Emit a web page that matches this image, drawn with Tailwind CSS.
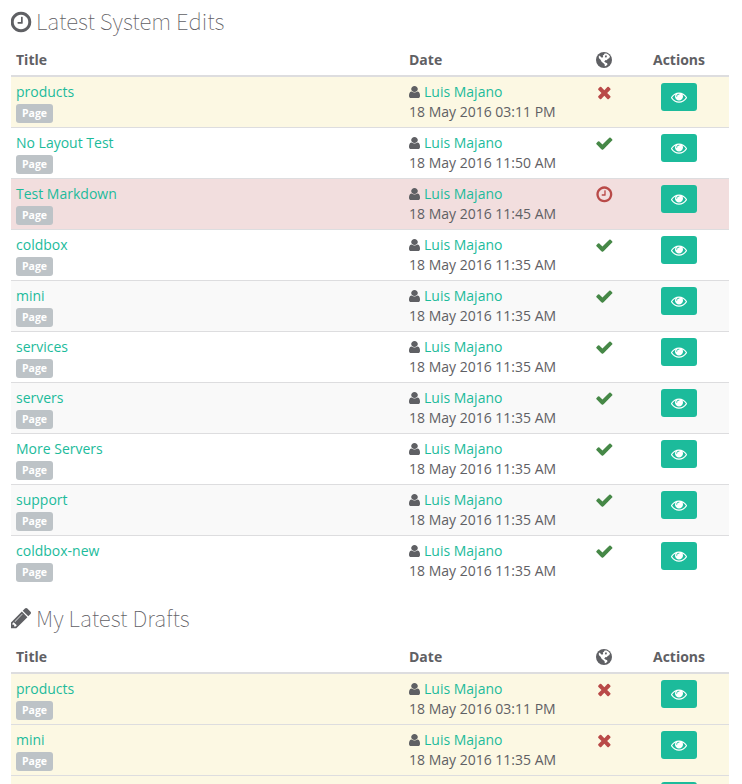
<!DOCTYPE html>
<html lang="en">
<head>
<meta charset="utf-8">
<title>Dashboard</title>
<script src="https://cdn.jsdelivr.net/npm/@tailwindcss/browser@4"></script>
</head>
<body class="bg-white overflow-hidden text-[14px] leading-[20px] text-[#5f6064] font-['Open_Sans',sans-serif]">
<svg class="hidden">
  <symbol id="clock" viewBox="0 0 1792 1792"><path d="M1024 544v448q0 14-9 23t-23 9h-320q-14 0-23-9t-9-23v-64q0-14 9-23t23-9h224v-352q0-14 9-23t23-9h64q14 0 23 9t9 23zm416 352q0-148-73-273t-198-198-273-73-273 73-198 198-73 273 73 273 198 198 273 73 273-73 198-198 73-273zm224 0q0 209-103 385.5t-279.5 279.5-385.5 103-385.5-103-279.5-279.5-103-385.5 103-385.5 279.5-279.5 385.5-103 385.5 103 279.5 279.5 103 385.5z"/></symbol>
  <symbol id="check" viewBox="0 0 1792 1792"><path d="M1671 566q0 40-28 68l-724 724-136 136q-28 28-68 28t-68-28l-136-136-362-362q-28-28-28-68t28-68l136-136q28-28 68-28t68 28l294 295 656-657q28-28 68-28t68 28l136 136q28 28 28 68z"/></symbol>
  <symbol id="times" viewBox="0 0 1792 1792"><path d="M1490 1322q0 40-28 68l-136 136q-28 28-68 28t-68-28l-294-294-294 294q-28 28-68 28t-68-28l-136-136q-28-28-28-68t28-68l294-294-294-294q-28-28-28-68t28-68l136-136q28-28 68-28t68 28l294 294 294-294q28-28 68-28t68 28l136 136q28 28 28 68t-28 68l-294 294 294 294q28 28 28 68z"/></symbol>
  <symbol id="eye" viewBox="0 0 1792 1792"><path d="M1664 960q-152-236-381-353 61 104 61 225 0 185-131.5 316.5t-316.5 131.5-316.5-131.5-131.5-316.5q0-121 61-225-229 117-381 353 133 205 333.5 326.5t434.5 121.5 434.5-121.5 333.5-326.5zm-720-384q0-20-14-34t-34-14q-125 0-214.5 89.5t-89.5 214.5q0 20 14 34t34 14 34-14 14-34q0-86 61-147t147-61q20 0 34-14t14-34zm848 384q0 34-20 69-140 230-376.5 368.5t-499.5 138.5-499.5-139-376.5-368q-20-35-20-69t20-69q140-229 376.5-368t499.5-139 499.5 139 376.5 368q20 35 20 69z"/></symbol>
  <symbol id="pencil" viewBox="0 0 1792 1792"><path d="M491 1536l91-91-235-235-91 91v107h128v128h107zm523-928q0-22-22-22-10 0-17 7l-542 542q-7 7-7 17 0 22 22 22 10 0 17-7l542-542q7-7 7-17zm-54-192l416 416-832 832h-416v-416zm683 96q0 53-37 90l-166 166-416-416 166-165q36-38 90-38 53 0 91 38l235 234q37 39 37 91z"/></symbol>
  <symbol id="user" viewBox="256 128 1280 1536" preserveAspectRatio="none"><path d="M1536 1399q0 109-62.5 187t-150.5 78h-854q-88 0-150.5-78t-62.5-187q0-85 8.5-160.5t31.5-152 58.5-131 94-89 134.5-34.5q131 128 313 128t313-128q76 0 134.5 34.5t94 89 58.5 131 31.5 152 8.5 160.5zm-256-887q0 159-112.5 271.5t-271.5 112.5-271.5-112.5-112.5-271.5 112.5-271.5 271.5-112.5 271.5 112.5 112.5 271.5z"/></symbol>
  <symbol id="globe" viewBox="0 0 16 16"><circle cx="8" cy="8" r="8"/><path fill="#fff" d="M8.6 1.6 10.6 1.4 12.6 2.8 14 4.6 13.2 6.2 12 6.8 10.6 8.2 9.6 8 8.2 9.6 9.4 10.6 11.2 11.2 11.4 12.8 9.8 14 8.8 14.2 8.6 12.2 7.2 11 5.6 9.8 4.6 7.8 3.2 6.4 2.6 4.8 3.8 3.4 4.8 5 6 5.8 7.2 5 6.8 3.4 8 2.8z"/><path d="M9.4 3.2 11 3.8 10.4 5.4 8.8 5.2z"/></symbol>
</svg>
<main class="ml-[11px] h-[784px] w-[718px] overflow-hidden">
  <section>
    <h2 class="flex h-[44px] items-center pb-[1px] text-[22.35px] font-thin font-['Noto_Sans_CJK_SC',sans-serif]"><svg class="-ml-[2px] mr-[3px] size-6 fill-current"><use href="#clock"/></svg><span class="pb-[3px]">Latest System Edits</span></h2>
    <div id="edits"></div>
  </section>
  <section class="pt-[11px]">
    <h2 class="flex h-[44px] items-center pb-[2px] text-[22.35px] font-thin font-['Noto_Sans_CJK_SC',sans-serif]"><svg class="-ml-[2px] mr-[3px] size-6 fill-current"><use href="#pencil"/></svg><span class="pb-[2px]">My Latest Drafts</span></h2>
    <div id="drafts"></div>
  </section>
</main>
<script>
const status = {
  times: '<svg class="mt-[6px] size-[18.67px] fill-[#b94a48]"><use href="#times"/></svg>',
  check: '<svg class="mt-[6px] size-[18.67px] fill-[#468847]"><use href="#check"/></svg>',
  clock: '<svg class="mt-[6px] size-[18.67px] fill-[#b94a48]"><use href="#clock"/></svg>'
};
const head = `<div class="grid h-[33px] grid-cols-[393px_175px_50px_100px] border-b-2 border-[#dddddf] pt-[6px] font-bold">
  <div class="pl-[5px]">Title</div><div class="pl-[5px]">Date</div>
  <div class="flex justify-center pt-[2px]"><svg class="size-4 fill-current"><use href="#globe"/></svg></div>
  <div class="text-center">Actions</div></div>`;
const view = '<div class="col-start-4 flex justify-center pt-[6px]"><a class="flex h-7 w-9 items-center justify-center rounded-[3px] bg-[#1cbb9b]"><svg class="size-4 fill-white"><use href="#eye"/></svg></a></div>';
const row = ([title, time, icon, bg], i) => `<div class="grid ${i ? 'h-[51px] border-t' : 'h-[50px]'} grid-cols-[393px_175px_50px_100px] border-[#dddddf] ${bg}">
  ${title ? `<div class="pl-[5px] pt-[5px]"><a class="block text-[#1cbb9b]">${title}</a>
    <span class="mt-[2px] flex h-[19px] w-[37px] items-center justify-center rounded-[3px] bg-[#bdc3c7] text-[10.5px] leading-none font-bold text-white">Page</span></div>
  <div class="pl-[5px] pt-[5px]"><div class="flex items-center"><svg class="mr-[4px] h-[12px] w-[11px] fill-current"><use href="#user"/></svg><a class="text-[#1cbb9b]">Luis Majano</a></div><div>18 May 2016 ${time}</div></div>
  <div class="flex justify-center">${status[icon]}</div>` : ''}
  ${view}</div>`;
const Y = 'bg-[#fcf8e3]', R = 'bg-[#f2dede]', G = 'bg-[#f9f9f9]', W = 'bg-white', T = '11:35 AM';
document.getElementById('edits').innerHTML = head + [
  ['products', '03:11 PM', 'times', Y], ['No Layout Test', '11:50 AM', 'check', W],
  ['Test Markdown', '11:45 AM', 'clock', R], ['coldbox', T, 'check', W],
  ['mini', T, 'check', G], ['services', T, 'check', W], ['servers', T, 'check', G],
  ['More Servers', T, 'check', W], ['support', T, 'check', G], ['coldbox-new', T, 'check', W]
].map(row).join('');
document.getElementById('drafts').innerHTML = head + [
  ['products', '03:11 PM', 'times', Y], ['mini', T, 'times', Y], ['', '', '', Y]
].map(row).join('');
</script>
</body>
</html>
